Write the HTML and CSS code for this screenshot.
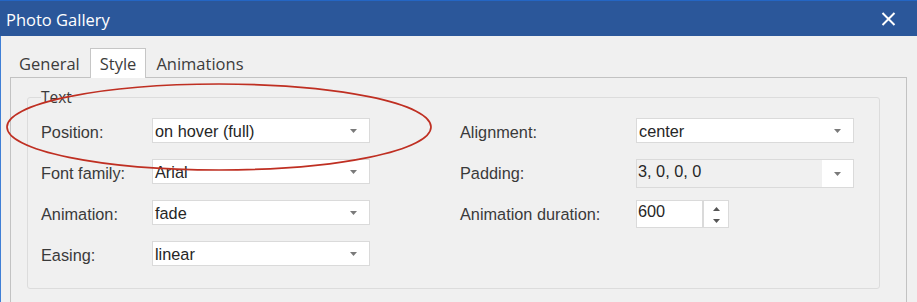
FILE: index.html
```html
<!DOCTYPE html>
<html>
<head>
<meta charset="utf-8">
<link rel="stylesheet" href="styles.css">
</head>
<body>
<div class="window">
  <div class="titlebar">
    <span class="title">Photo Gallery</span>
    <svg class="close" width="15" height="14" viewBox="0 0 15 14"><path d="M1.5 1 L13.5 13 M13.5 1 L1.5 13" stroke="#fff" stroke-width="2" fill="none"/></svg>
  </div>
  <div class="body">
    <div class="tabs">
      <div class="tab">General</div>
      <div class="tab active">Style</div>
      <div class="tab">Animations</div>
    </div>
    <div class="panel">
      <fieldset class="group">
        <legend>Text</legend>
        <div class="form">
          <div class="col col-left">
            <div class="label">Position:</div>
            <div class="select"><span class="value">on hover (full)</span><svg class="arrow" width="7" height="4" viewBox="0 0 7 4"><path d="M0 0 H7 L3.5 4 Z" fill="#7a7a7a"/></svg></div>
            <div class="label">Font family:</div>
            <div class="select"><span class="value">Arial</span><svg class="arrow" width="7" height="4" viewBox="0 0 7 4"><path d="M0 0 H7 L3.5 4 Z" fill="#7a7a7a"/></svg></div>
            <div class="label">Animation:</div>
            <div class="select"><span class="value">fade</span><svg class="arrow" width="7" height="4" viewBox="0 0 7 4"><path d="M0 0 H7 L3.5 4 Z" fill="#7a7a7a"/></svg></div>
            <div class="label">Easing:</div>
            <div class="select"><span class="value">linear</span><svg class="arrow" width="7" height="4" viewBox="0 0 7 4"><path d="M0 0 H7 L3.5 4 Z" fill="#7a7a7a"/></svg></div>
          </div>
          <div class="col col-right">
            <div class="label">Alignment:</div>
            <div class="select"><span class="value">center</span><svg class="arrow" width="7" height="4" viewBox="0 0 7 4"><path d="M0 0 H7 L3.5 4 Z" fill="#7a7a7a"/></svg></div>
            <div class="label">Padding:</div>
            <div class="combo">
              <span class="combo-text">3, 0, 0, 0</span>
              <span class="combo-btn"><svg width="7" height="4" viewBox="0 0 7 4"><path d="M0 0 H7 L3.5 4 Z" fill="#7a7a7a"/></svg></span>
            </div>
            <div class="label">Animation duration:</div>
            <div class="spin">
              <span class="spin-input">600</span>
              <span class="spin-btn">
                <svg width="7" height="4" viewBox="0 0 7 4"><path d="M0 4 H7 L3.5 0 Z" fill="#555"/></svg>
                <svg width="7" height="4" viewBox="0 0 7 4"><path d="M0 0 H7 L3.5 4 Z" fill="#555"/></svg>
              </span>
            </div>
          </div>
        </div>
      </fieldset>
    </div>
  </div>
  <svg class="highlight" width="917" height="302" viewBox="0 0 917 302"><ellipse cx="219" cy="127" rx="212" ry="43" fill="none" stroke="#bf2f22" stroke-width="1.7"/></svg>
</div>
</body>
</html>
```

FILE: styles.css
```css
html, body {
  margin: 0;
  padding: 0;
}
body {
  width: 917px;
  height: 302px;
  overflow: hidden;
  background: #f0f0f0;
  font-family: "Liberation Sans", Arial, sans-serif;
}
.window {
  position: relative;
  width: 917px;
  height: 302px;
}
.titlebar {
  box-sizing: border-box;
  height: 36px;
  background: #2b579a;
  border-top: 1px solid #2466c4;
  padding: 2px 21px 0 6px;
  display: flex;
  align-items: center;
  justify-content: space-between;
}
.title {
  color: #ffffff;
  font-family: "Open Sans", sans-serif;
  font-size: 16.5px;
}
.close {
  display: block;
  margin-top: -2px;
}
.body {
  box-sizing: border-box;
  height: 266px;
  border-left: 1px solid #3f7fd6;
  padding-top: 12px;
}
.tabs {
  display: flex;
  height: 29px;
  padding-left: 8px;
}
.tab {
  box-sizing: border-box;
  height: 29px;
  padding: 2px 9px 0;
  border: 1px solid transparent;
  border-bottom: none;
  font-family: "Open Sans", sans-serif;
  font-size: 16.5px;
  line-height: 26px;
  color: #3c3c3c;
}
.tab.active {
  background: #ffffff;
  border-color: #c6c6c6;
  height: 30px;
  margin-bottom: -1px;
  position: relative;
  z-index: 1;
}
.panel {
  box-sizing: border-box;
  height: 240px;
  margin: 0 10px 0 9px;
  border: 1px solid #c2c2c2;
  padding-top: 9px;
}
.group {
  margin: 0 26px 0 16px;
  padding: 11px 24px 22px 13px;
  border: 1px solid #dcdcdc;
  border-radius: 3px;
  min-width: 0;
}
.group legend {
  padding: 0;
  font-family: "Open Sans", sans-serif;
  font-size: 15.5px;
  line-height: 20px;
  color: #3a3a3a;
}
.form {
  display: flex;
  gap: 90px;
}
.col {
  display: grid;
  grid-auto-rows: 25px;
  row-gap: 16px;
  align-items: start;
}
.col-left {
  grid-template-columns: 111px 218px;
}
.col-right {
  grid-template-columns: 176px 218px;
}
.label {
  padding-top: 5.3px;
  font-size: 16.3px;
  color: #3a3a3a;
  white-space: nowrap;
}
.select {
  box-sizing: border-box;
  height: 25px;
  border: 1px solid #dadada;
  background: #ffffff;
  display: flex;
  align-items: flex-start;
  padding-left: 2px;
}
.value {
  padding-top: 2.8px;
  font-size: 16.3px;
  color: #262626;
}
.arrow {
  margin-left: auto;
  margin-right: 12px;
  align-self: center;
  display: block;
}
.combo {
  box-sizing: border-box;
  height: 29px;
  border: 1px solid #dadada;
  background: #f0f0f0;
  display: flex;
}
.combo-text {
  flex: 1;
  padding: 2px 0 0 1px;
  font-size: 16.3px;
  color: #262626;
}
.combo-btn {
  width: 31px;
  background: #ffffff;
  display: flex;
  align-items: center;
  justify-content: center;
  padding-top: 1px;
}
.combo-btn svg {
  display: block;
}
.spin {
  display: flex;
  height: 28px;
}
.spin-input {
  box-sizing: border-box;
  width: 67px;
  height: 28px;
  border: 1px solid #dadada;
  background: #ffffff;
  padding: 1px 0 0 1px;
  font-size: 16.3px;
  color: #262626;
}
.spin-btn {
  box-sizing: border-box;
  width: 26px;
  height: 28px;
  border: 1px solid #dadada;
  background: #ffffff;
  display: flex;
  flex-direction: column;
  align-items: center;
  justify-content: center;
  gap: 8px;
  padding-top: 1px;
}
.spin-btn svg {
  display: block;
}
.highlight {
  position: absolute;
  top: 0;
  left: 0;
  pointer-events: none;
}
```
